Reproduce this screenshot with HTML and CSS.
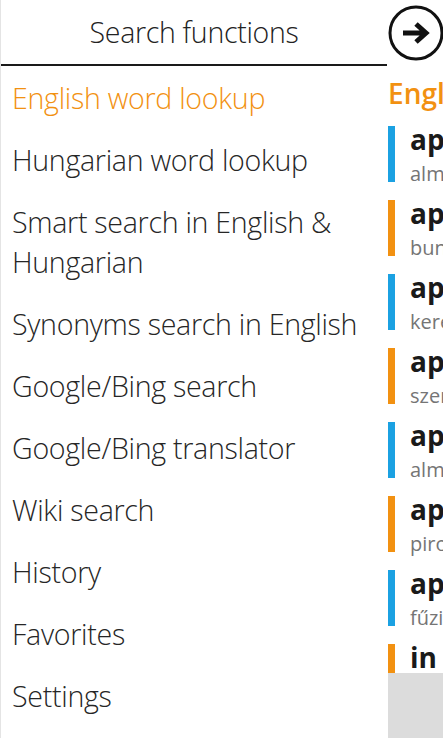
FILE: index.html
```html
<!DOCTYPE html>
<html lang="en">
<head>
    <meta charset="UTF-8">
    <meta name="viewport" content="width=device-width, initial-scale=1.0">
    <title>Dictionary</title>
    <link rel="stylesheet" href="styles.css">
</head>
<body>
    <div class="menu-panel">
        <div class="menu-header">Search functions</div>
        <ul class="menu-list">
            <li class="active">English word lookup</li>
            <li>Hungarian word lookup</li>
            <li>Smart search in English &amp; Hungarian</li>
            <li>Synonyms search in English</li>
            <li>Google/Bing search</li>
            <li>Google/Bing translator</li>
            <li>Wiki search</li>
            <li>History</li>
            <li>Favorites</li>
            <li>Settings</li>
        </ul>
    </div>

    <div class="results-panel">
        <div class="results-top">
            <svg class="go-button" width="56" height="56" viewBox="0 0 56 56">
                <circle cx="28" cy="28" r="26" fill="none" stroke="#111" stroke-width="3"/>
                <path d="M15 28 H37 M28 19 L38 28 L28 37" fill="none" stroke="#111" stroke-width="5" stroke-linejoin="miter"/>
            </svg>
        </div>
        <div class="results-title">English word lookup</div>
        <div class="result-list" id="resultList"></div>
        <div class="results-more"></div>
    </div>

    <script>
        // Találatok
        const results = [
            { word: 'apple', meaning: 'alma', color: 'blue' },
            { word: 'apple blossom', meaning: 'bunkó', color: 'orange' },
            { word: 'apple cart', meaning: 'kereskedés', color: 'blue' },
            { word: 'apple of the eye', meaning: 'szem fénye', color: 'orange' },
            { word: 'apple pie', meaning: 'almás pite', color: 'blue' },
            { word: 'apple-cheeked', meaning: 'piros arcú', color: 'orange' },
            { word: 'apple-jack', meaning: 'fűzike', color: 'blue' }
        ];

        const list = document.getElementById('resultList');
        results.forEach(r => {
            const div = document.createElement('div');
            div.className = 'result ' + r.color;
            div.innerHTML = `<div class="word">${r.word}</div><div class="meaning">${r.meaning}</div>`;
            list.appendChild(div);
        });

        const last = document.createElement('div');
        last.className = 'result orange short';
        last.innerHTML = '<div class="word">in</div>';
        list.appendChild(last);
    </script>
</body>
</html>
```

FILE: styles.css
```css
body {
    margin: 0;
    display: flex;
    width: 443px;
    height: 738px;
    overflow: hidden;
    background: #fff;
    font-family: 'Open Sans', 'Noto Sans', sans-serif;
    color: #222;
}

/* left menu */
.menu-panel {
    flex: 0 0 387px;
    border-left: 1px solid #e4e4e4;
    box-sizing: border-box;
}

.menu-header {
    height: 64px;
    line-height: 64px;
    border-bottom: 2px solid #1a1a1a;
    text-align: center;
    font-size: 28.5px;
    font-weight: 300;
    letter-spacing: -0.3px;
}

.menu-list {
    list-style: none;
    margin: 1px 0 0;
    padding: 0;
}

.menu-list li {
    padding: 11px 0 11px 11px;
    font-size: 28.6px;
    font-weight: 300;
    line-height: 40px;
    letter-spacing: -0.3px;
    color: #262626;
}

.menu-list li.active {
    color: #f29111;
}

/* right results */
.results-panel {
    flex: 1;
    min-width: 0;
    overflow: hidden;
    padding-left: 1px;
}

.results-top {
    height: 66px;
    display: flex;
    align-items: center;
}

.go-button {
    display: block;
    flex: none;
}

.results-title {
    white-space: nowrap;
    font-size: 28px;
    font-weight: 600;
    color: #f29111;
    line-height: 40px;
    margin-top: 7px;
    margin-bottom: 13px;
}

.result-list {
    display: flex;
    flex-direction: column;
    gap: 18px;
}

.result {
    border-left: 7px solid #1ba1e2;
    padding-left: 15px;
    height: 56px;
    white-space: nowrap;
}

.result.orange {
    border-left-color: #f29111;
}

.result.short {
    height: 29px;
}

.word {
    font-size: 28px;
    font-weight: 700;
    line-height: 26px;
    color: #1a1a1a;
}

.meaning {
    margin-top: 10px;
    font-size: 20px;
    line-height: 24px;
    color: #757575;
}

.results-more {
    height: 80px;
    background: #dcdcdc;
}
```
